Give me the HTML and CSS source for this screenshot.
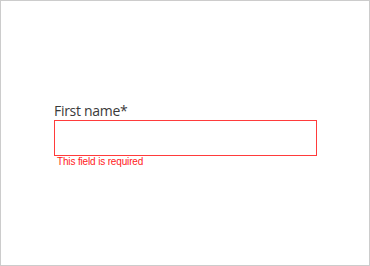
FILE: index.html
```html
<!DOCTYPE html>
<html>
<head>
<meta charset="utf-8">
<link rel="stylesheet" href="styles.css">
</head>
<body>
<div class="frame">
  <div class="field">
    <label class="label" for="fn">First name*</label>
    <input class="input" id="fn" type="text">
    <div class="error">This field is required</div>
  </div>
</div>
</body>
</html>
```
FILE: styles.css
```css
html, body {
  margin: 0;
  padding: 0;
  background: #fff;
}
.frame {
  box-sizing: border-box;
  width: 370px;
  height: 266px;
  border: 1px solid #cccccc;
  padding: 101px 0 0 53px;
}
.field {
  display: flex;
  flex-direction: column;
  width: 263px;
}
.label {
  font-family: "Open Sans", sans-serif;
  font-size: 14px;
  line-height: 18px;
  letter-spacing: -0.3px;
  color: #3a3a3a;
}
.input {
  box-sizing: border-box;
  width: 263px;
  height: 36px;
  margin: 0;
  border: 1px solid #ff3b3b;
  background: #fff;
  outline: none;
}
.error {
  font-family: "Liberation Sans", Arial, sans-serif;
  font-size: 10px;
  line-height: 11px;
  letter-spacing: -0.15px;
  color: #ff1a1a;
  padding-left: 3px;
}
```
